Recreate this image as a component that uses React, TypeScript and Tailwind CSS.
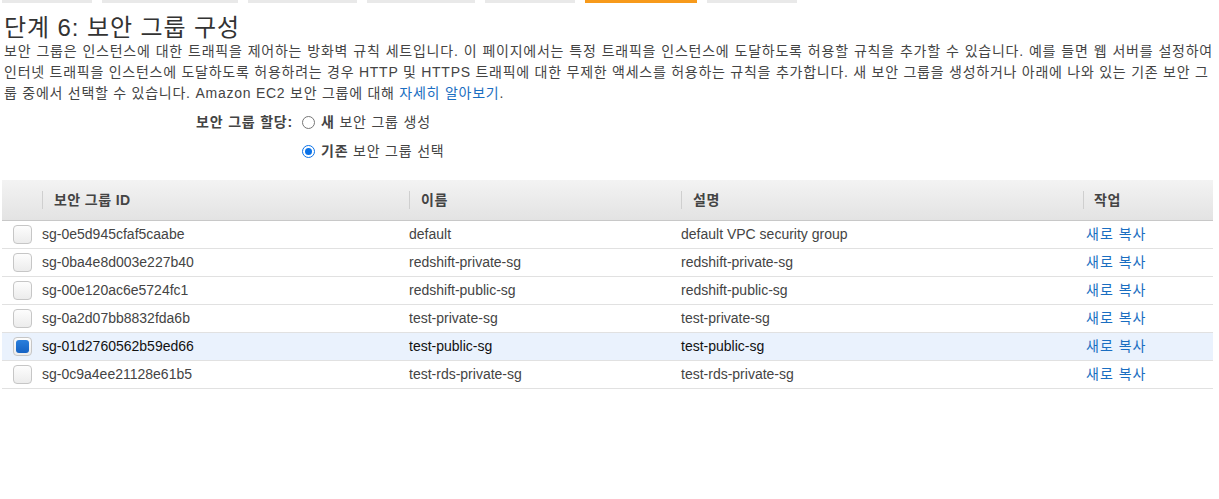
import React from "react";

const rows = [
  { id: "sg-0e5d945cfaf5caabe", name: "default", desc: "default VPC security group", checked: false },
  { id: "sg-0ba4e8d003e227b40", name: "redshift-private-sg", desc: "redshift-private-sg", checked: false },
  { id: "sg-00e120ac6e5724fc1", name: "redshift-public-sg", desc: "redshift-public-sg", checked: false },
  { id: "sg-0a2d07bb8832fda6b", name: "test-private-sg", desc: "test-private-sg", checked: false },
  { id: "sg-01d2760562b59ed66", name: "test-public-sg", desc: "test-public-sg", checked: true },
  { id: "sg-0c9a4ee21128e61b5", name: "test-rds-private-sg", desc: "test-rds-private-sg", checked: false },
];

const tabs = [
  { w: "w-[90px]", active: false },
  { w: "w-[136px]", active: false },
  { w: "w-[109px]", active: false },
  { w: "w-[108px]", active: false },
  { w: "w-[90px]", active: false },
  { w: "w-[112px]", active: true },
  { w: "w-[90px]", active: false },
];

function Checkbox({ checked }: { checked: boolean }) {
  return (
    <div className="w-[19px] h-[19px] rounded-[4px] border border-[#c6c6c6] bg-gradient-to-b from-[#fdfdfd] to-[#ececec] flex items-center justify-center">
      {checked && <div className="w-[13px] h-[13px] rounded-[3px] bg-gradient-to-b from-[#2a7fdc] to-[#1462c4]" />}
    </div>
  );
}

function Radio({ checked }: { checked: boolean }) {
  return (
    <div
      className={
        checked
          ? "w-[13px] h-[13px] rounded-full border-[1.5px] border-[#0a72e8] bg-white flex items-center justify-center"
          : "w-[13px] h-[13px] rounded-full border border-[#767676] bg-white"
      }
    >
      {checked && <div className="w-[7px] h-[7px] rounded-full bg-[#0a72e8]" />}
    </div>
  );
}

export default function App() {
  return (
    <div
      className="w-[1219px] h-[499px] bg-white text-[#444] overflow-hidden"
      style={{ fontFamily: '"Liberation Sans", Arial, "Noto Sans CJK KR", sans-serif' }}
    >
      <div className="flex gap-[10px] pl-[2px] h-[3px]">
        {tabs.map((t, i) => (
          <div key={i} className={`${t.w} h-[3px] ${t.active ? "bg-[#f79a1b]" : "bg-[#e9e9e9]"}`} />
        ))}
      </div>
      <div className="pl-[4px] w-[1213px]">
        <h1 className="text-[24px] leading-[28px] mt-[11px] text-[#333] tracking-[0.9px]">단계 6: 보안 그룹 구성</h1>
        <div className="text-[14px] leading-[21px] -mt-[1px] text-[#444] tracking-[0.75px]">
          <div className="whitespace-nowrap [text-align-last:justify] text-justify">
            보안 그룹은 인스턴스에 대한 트래픽을 제어하는 방화벽 규칙 세트입니다. 이 페이지에서는 특정 트래픽을 인스턴스에 도달하도록 허용할 규칙을 추가할 수 있습니다. 예를 들면 웹 서버를 설정하여
          </div>
          <div className="whitespace-nowrap">
            인터넷 트래픽을 인스턴스에 도달하도록 허용하려는 경우 HTTP 및 HTTPS 트래픽에 대한 무제한 액세스를 허용하는 규칙을 추가합니다. 새 보안 그룹을 생성하거나 아래에 나와 있는 기존 보안 그
          </div>
          <div className="whitespace-nowrap">
            룹 중에서 선택할 수 있습니다. Amazon EC2 보안 그룹에 대해{" "}
            <span className="text-[#1a6ec1]">자세히 알아보기</span>.
          </div>
        </div>
      </div>

      <div className="mt-[7px] text-[14px]">
        <div className="flex items-center h-[22px]">
          <div className="w-[293px] text-right font-bold text-[#444] tracking-[0.8px]">보안 그룹 할당:</div>
          <div className="flex items-center gap-[6px] ml-[9px]">
            <Radio checked={false} />
            <span className="tracking-[0.8px]"><b>새</b> 보안 그룹 생성</span>
          </div>
        </div>
        <div className="flex items-center h-[22px] mt-[7px]">
          <div className="w-[293px]" />
          <div className="flex items-center gap-[6px] ml-[9px]">
            <Radio checked={true} />
            <span className="tracking-[0.8px]"><b>기존</b> 보안 그룹 선택</span>
          </div>
        </div>
      </div>

      <div className="ml-[2px] w-[1211px] mt-[18px] text-[14px]">
        <div className="grid grid-cols-[40px_367px_272px_402px_130px] h-[41px] bg-gradient-to-b from-[#f3f3f3] to-[#e3e3e3] border-b border-[#c8c8c8] items-center font-bold text-[#444]">
          <div />
          <div className="border-l border-[#cfcfcf] h-[18px] flex items-center pl-[11px] tracking-[0.4px]">보안 그룹 ID</div>
          <div className="border-l border-[#cfcfcf] h-[18px] flex items-center pl-[11px] tracking-[0.6px]">이름</div>
          <div className="border-l border-[#cfcfcf] h-[18px] flex items-center pl-[11px] tracking-[0.6px]">설명</div>
          <div className="border-l border-[#cfcfcf] h-[18px] flex items-center pl-[10px] tracking-[0.6px]">작업</div>
        </div>
        {rows.map((r) => (
          <div
            key={r.id}
            className={`grid grid-cols-[40px_367px_272px_402px_130px] h-[28px] border-b border-[#e1e1e1] items-center ${
              r.checked ? "bg-[#eaf2fd] text-[#111]" : "bg-white text-[#444]"
            }`}
          >
            <div className="pl-[11px]">
              <Checkbox checked={r.checked} />
            </div>
            <div>{r.id}</div>
            <div>{r.name}</div>
            <div>{r.desc}</div>
            <div className="pl-[3px] text-[#1a6ec1] tracking-[1px]">새로 복사</div>
          </div>
        ))}
      </div>
    </div>
  );
}
